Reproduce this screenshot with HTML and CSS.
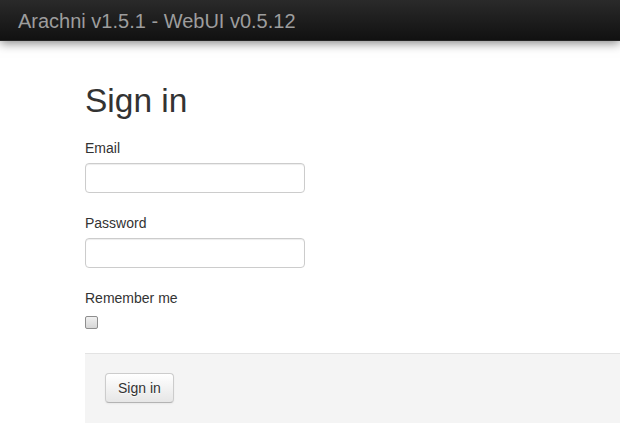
FILE: index.html
```html
<!DOCTYPE html>
<html lang="en">
<head>
<meta charset="utf-8">
<title>Sign in</title>
<link rel="stylesheet" href="styles.css">
</head>
<body>
<header class="navbar">
  <a class="brand" href="#">Arachni v1.5.1 - WebUI v0.5.12</a>
</header>
<main class="container">
  <h1 class="title">Sign in</h1>
  <form class="form">
    <div class="field">
      <label class="label" for="email">Email</label>
      <input class="input" id="email" type="email">
    </div>
    <div class="field">
      <label class="label" for="password">Password</label>
      <input class="input" id="password" type="password">
    </div>
    <div class="field field-check">
      <label class="label" for="remember">Remember me</label>
      <input class="check" id="remember" type="checkbox">
    </div>
    <div class="form-actions">
      <button class="btn" type="button">Sign in</button>
    </div>
  </form>
</main>
</body>
</html>
```
FILE: styles.css
```css
* { box-sizing: border-box; }
html, body { margin: 0; padding: 0; }
body {
  font-family: "Liberation Sans", Arial, Helvetica, sans-serif;
  font-size: 14px;
  line-height: 20px;
  color: #333;
  background: #fff;
  overflow: hidden;
}
.navbar {
  height: 41px;
  background: linear-gradient(to bottom, #2a2a2a, #111);
  border-bottom: 1px solid #252525;
  box-shadow: 0 2px 10px rgba(0, 0, 0, 0.5);
  padding: 0 18px;
  display: flex;
  align-items: center;
  position: relative;
  z-index: 2;
}
.brand {
  color: #9d9d9d;
  font-size: 20px;
  line-height: 40px;
  text-decoration: none;
  margin-top: 1px;
}
.container {
  padding: 40px 0 0 85px;
}
.title {
  margin: 0 0 17px;
  font-size: 33.5px;
  line-height: 40px;
  font-weight: normal;
  color: #333;
}
.field { margin-bottom: 20px; }
.label {
  display: block;
  margin-bottom: 5px;
}
.input {
  display: block;
  width: 220px;
  height: 30px;
  padding: 4px 6px;
  border: 1px solid #ccc;
  border-radius: 4px;
  box-shadow: inset 0 1px 1px rgba(0, 0, 0, 0.075);
  font: inherit;
  color: #555;
  background: #fff;
  outline: none;
}
.field-check { margin-bottom: 0; }
.check {
  appearance: none;
  -webkit-appearance: none;
  display: block;
  width: 13px;
  height: 13px;
  margin: 8px 0 0;
  border: 1px solid #8e8e8e;
  border-radius: 2px;
  background: linear-gradient(to bottom, #f0f0f0, #d6d6d6);
}
.form-actions {
  margin-top: 24px;
  padding: 19px 20px 20px;
  background: #f4f4f4;
  border-top: 1px solid #e3e3e3;
}
.btn {
  display: inline-block;
  height: 30px;
  padding: 4px 12px;
  font: inherit;
  line-height: 20px;
  color: #333;
  text-shadow: 0 1px 1px rgba(255, 255, 255, 0.75);
  background: linear-gradient(to bottom, #fff, #e6e6e6);
  border: 1px solid #ccc;
  border-bottom-color: #b3b3b3;
  border-radius: 4px;
  box-shadow: inset 0 1px 0 rgba(255, 255, 255, 0.2), 0 1px 2px rgba(0, 0, 0, 0.05);
  cursor: pointer;
}
```
